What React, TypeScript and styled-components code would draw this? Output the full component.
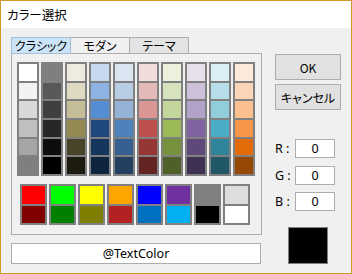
import React from "react";
import styled, { createGlobalStyle } from "styled-components";

const Global = createGlobalStyle`
  html, body { margin: 0; padding: 0; background: #ffffff; }
  body { font-family: "Noto Sans CJK JP", "Noto Sans", sans-serif; font-feature-settings: "palt"; }
  * { box-sizing: border-box; }
`;

const Window = styled.div`
  width: 352px;
  height: 274px;
  border: 1px solid #d09a2a;
  background: #f0f0f0;
  display: flex;
  flex-direction: column;
`;

const TitleBar = styled.div`
  height: 27px;
  background: #ffffff;
  display: flex;
  align-items: center;
  padding-left: 6px;
  font-size: 12.5px;
  color: #000;
`;

const Body = styled.div`
  flex: 1;
  display: flex;
  padding: 9px 9px 0 10px;
  gap: 13px;
`;

const LeftCol = styled.div`
  width: 251px;
  display: flex;
  flex-direction: column;
`;

const TabStrip = styled.div`
  display: flex;
  height: 17px;
  margin-bottom: -1px;
`;

const Tab = styled.div<{ $active?: boolean; $dim?: boolean }>`
  width: 60px;
  height: 17px;
  margin-left: -1px;
  &:first-child { margin-left: 0; }
  border: 1px solid ${(p) => (p.$active ? "#a3bed6" : "#adadad")};
  background: ${(p) => (p.$active ? "#cce4f7" : p.$dim ? "#e3e3e3" : "#f0f0f0")};
  display: flex;
  align-items: center;
  justify-content: center;
  font-size: 12px;
  line-height: 1;
  color: #000;
  position: relative;
  z-index: ${(p) => (p.$active ? 1 : 0)};
`;

const Panel = styled.div`
  height: 182px;
  border: 1px solid #adadad;
  padding: 8px 5px 8px 5px;
  display: flex;
  flex-direction: column;
  gap: 8px;
`;

const Palette = styled.div`
  display: flex;
  gap: 2px;
`;

const PaletteColumn = styled.div`
  width: 22px;
  height: 114px;
  background: #808080;
  padding: 2px;
  display: flex;
  flex-direction: column;
  gap: 2px;
`;

const Cell = styled.div<{ $c: string }>`
  flex: 1;
  background: ${(p) => p.$c};
`;

const StandardGrid = styled.div`
  margin-left: 3px;
  width: 230px;
  display: grid;
  grid-template-columns: repeat(8, 1fr);
  gap: 2px;
`;

const StandardSwatch = styled.div`
  height: 41px;
  background: #808080;
  padding: 2px;
  display: flex;
  flex-direction: column;
  gap: 2px;
`;

const NameBox = styled.div`
  margin-top: 8px;
  height: 21px;
  width: 250px;
  background: #ffffff;
  border: 1px solid #adadad;
  display: flex;
  align-items: center;
  justify-content: center;
  font-family: "Noto Sans", sans-serif;
  font-size: 12.5px;
  color: #000;
`;

const RightCol = styled.div`
  width: 66px;
  padding-top: 17px;
  display: flex;
  flex-direction: column;
`;

const Button = styled.div`
  height: 26px;
  background: #e1e1e1;
  border: 1px solid #adadad;
  display: flex;
  align-items: center;
  justify-content: center;
  font-size: 12px;
  color: #000;
  margin-bottom: 4px;
`;

const RgbList = styled.div`
  margin-top: 25px;
  display: flex;
  flex-direction: column;
  gap: 7.5px;
`;

const RgbRow = styled.div`
  display: flex;
  align-items: center;
  height: 19px;
`;

const RgbLabel = styled.div`
  width: 20px;
  font-family: "Noto Sans", sans-serif;
  font-size: 12.5px;
  color: #000;
  white-space: pre;
`;

const RgbInput = styled.div`
  width: 40px;
  height: 19px;
  background: #fff;
  border: 1px solid #adadad;
  display: flex;
  align-items: center;
  justify-content: center;
  font-family: "Noto Sans", sans-serif;
  font-size: 12.5px;
  color: #000;
`;

const Preview = styled.div`
  margin: 16px auto 0 auto;
  width: 40px;
  height: 37px;
  background: #000;
  border: 1px solid #808080;
`;

const themeColumns: string[][] = [
  ["#ffffff", "#f2f2f2", "#d8d8d8", "#bfbfbf", "#a5a5a5", "#7f7f7f"],
  ["#7f7f7f", "#595959", "#3f3f3f", "#262626", "#0d0d0d", "#000000"],
  ["#eeece1", "#ddd9c3", "#c4bd97", "#938953", "#494429", "#1d1b10"],
  ["#c6d9f0", "#8db3e2", "#548dd4", "#1f497d", "#17365d", "#0f243e"],
  ["#dbe5f1", "#b8cce4", "#95b3d7", "#4f81bd", "#366092", "#244061"],
  ["#f2dcdb", "#e5b9b7", "#d99694", "#c0504d", "#953734", "#632423"],
  ["#ebf1dd", "#d7e3bc", "#c3d69b", "#9bbb59", "#76923c", "#4f6128"],
  ["#e5e0ec", "#ccc1d9", "#b2a2c7", "#8064a2", "#5f497a", "#3f3151"],
  ["#dbeef3", "#b7dde8", "#92cddc", "#4bacc6", "#31859b", "#205867"],
  ["#fdeada", "#fbd5b5", "#fac08f", "#f79646", "#e36c09", "#974806"],
];

const standardColors: [string, string][] = [
  ["#ff0000", "#800000"],
  ["#00ff00", "#008000"],
  ["#ffff00", "#808000"],
  ["#ffa500", "#b22222"],
  ["#0000ff", "#0070c0"],
  ["#7030a0", "#00b0f0"],
  ["#808080", "#000000"],
  ["#dddddd", "#ffffff"],
];

export default function App() {
  return (
    <>
      <Global />
      <Window>
        <TitleBar>カラー選択</TitleBar>
        <Body>
          <LeftCol>
            <TabStrip>
              <Tab $active>クラシック</Tab>
              <Tab>モダン</Tab>
              <Tab $dim>テーマ</Tab>
            </TabStrip>
            <Panel>
              <Palette>
                {themeColumns.map((col, i) => (
                  <PaletteColumn key={i}>
                    {col.map((c, j) => (
                      <Cell key={j} $c={c} />
                    ))}
                  </PaletteColumn>
                ))}
              </Palette>
              <StandardGrid>
                {standardColors.map(([a, b], i) => (
                  <StandardSwatch key={i}>
                    <Cell $c={a} />
                    <Cell $c={b} />
                  </StandardSwatch>
                ))}
              </StandardGrid>
            </Panel>
            <NameBox>@TextColor</NameBox>
          </LeftCol>
          <RightCol>
            <Button>OK</Button>
            <Button>キャンセル</Button>
            <RgbList>
              {["R", "G", "B"].map((k) => (
                <RgbRow key={k}>
                  <RgbLabel>{k} :</RgbLabel>
                  <RgbInput>0</RgbInput>
                </RgbRow>
              ))}
            </RgbList>
            <Preview />
          </RightCol>
        </Body>
      </Window>
    </>
  );
}
